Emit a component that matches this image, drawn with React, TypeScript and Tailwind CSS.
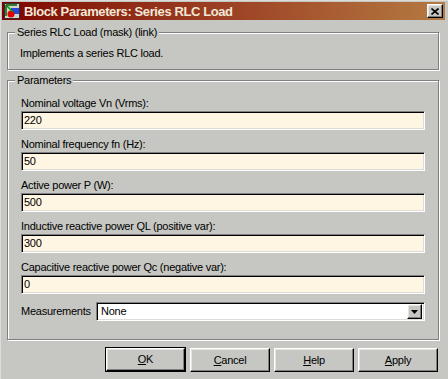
const FIELDS = [
  { label: 'Nominal voltage Vn (Vrms):', value: '220' },
  { label: 'Nominal frequency fn (Hz):', value: '50' },
  { label: 'Active power P (W):', value: '500' },
  { label: 'Inductive reactive power QL (positive var):', value: '300' },
  { label: 'Capacitive reactive power Qc (negative var):', value: '0' },
];

const BUTTONS = [
  { key: 'O', rest: 'K', isDefault: true },
  { key: 'C', rest: 'ancel', isDefault: false },
  { key: 'H', rest: 'elp', isDefault: false },
  { key: 'A', rest: 'pply', isDefault: false },
];

const raised =
  'border border-t-white border-l-white border-r-black border-b-black shadow-[inset_-1px_-1px_0_#808080,inset_1px_1px_0_#e4e4e0] bg-[#c6c7c2]';

const sunken =
  'border border-t-[#808080] border-l-[#808080] border-r-white border-b-white shadow-[inset_1px_1px_0_#000,inset_-1px_-1px_0_#dcdcd8]';

const groupBox =
  'border border-[#808080] shadow-[inset_1px_1px_0_#fff,1px_1px_0_#fff] m-0';

const BlockIcon = () => (
  <svg width="16" height="16" viewBox="0 0 16 16">
    <rect x="0.5" y="0.5" width="15" height="15" fill="#d4d4cc" stroke="#303030" />
    <path d="M2 2 L2 13 M2 2 L13 2" stroke="#006000" strokeWidth="1.5" />
    <rect x="7" y="5" width="8" height="6" fill="#2848d8" />
    <circle cx="7" cy="11" r="3.5" fill="#e00000" />
    <path d="M3 3 L9 9" stroke="#00a000" strokeWidth="1.5" />
  </svg>
);

const App = () => {
  return (
    <div className="w-[448px] h-[379px] overflow-hidden bg-[#c6c7c2] border-l border-t border-l-[#dcdcd8] border-t-[#dcdcd8] pl-[1px] pt-[1px] pr-[3px] font-['Liberation_Sans',Arial,sans-serif] text-[11px] tracking-[-0.25px] text-black">
      {/* title bar */}
      <div className="h-[18px] flex items-center bg-gradient-to-r from-[#7e0000] via-[#9c4024] to-[#b47a42] pl-[2px] pr-[2px]">
        <BlockIcon />
        <span className="ml-[4px] text-[13px] font-bold tracking-[-0.4px] text-[#f2e8d8] leading-none">
          Block Parameters: Series RLC Load
        </span>
        <div className={`ml-auto w-[16px] h-[14px] flex items-center justify-center ${raised}`}>
          <svg width="8" height="7" viewBox="0 0 8 7">
            <path d="M0.5 0.5 L7.5 6.5 M7.5 0.5 L0.5 6.5" stroke="#000" strokeWidth="1.6" />
          </svg>
        </div>
      </div>

      <div className="flex flex-col pl-[5px] pr-[6px]">
        {/* mask description */}
        <fieldset className={`${groupBox} mt-[5px] pl-[5px] pr-[8px] pt-[7px] pb-[9px]`}>
          <legend className="ml-[2px] px-[2px] leading-[14px] bg-[#c6c7c2]">
            Series RLC Load (mask) (link)
          </legend>
          <p className="pl-[7px] leading-[14px]">Implements a series RLC load.</p>
        </fieldset>

        {/* parameters */}
        <fieldset className={`${groupBox} mt-[3px] pl-[13px] pr-[13px] pt-[9px] pb-[18px]`}>
          <legend className="ml-[-6px] px-[2px] leading-[14px] bg-[#c6c7c2]">Parameters</legend>
          <div className="flex flex-col gap-[7px]">
            {FIELDS.map((f) => (
              <div key={f.label} className="flex flex-col">
                <label className="h-[14px] leading-[14px]">{f.label}</label>
                <div className={`mt-[1px] h-[19px] flex items-center pl-[2px] bg-[#fff5e3] ${sunken}`}>
                  {f.value}
                </div>
              </div>
            ))}
          </div>
          <div className="mt-[8px] flex items-center">
            <span className="w-[75px]">Measurements</span>
            <div className={`flex-1 h-[19px] flex items-center bg-white pl-[4px] pr-[2px] ${sunken}`}>
              <span>None</span>
              <div className={`ml-auto w-[15px] h-[15px] flex items-center justify-center ${raised}`}>
                <svg width="7" height="4" viewBox="0 0 7 4">
                  <path d="M0 0 H7 L3.5 4 Z" fill="#000" />
                </svg>
              </div>
            </div>
          </div>
        </fieldset>

        {/* buttons */}
        <div className="mt-[7px] flex justify-end gap-[4px] pr-[1px]">
          {BUTTONS.map((b) =>
            b.isDefault ? (
              <div key={b.key} className="w-[81px] h-[25px] border border-black flex">
                <button className={`flex-1 flex items-center justify-center ${raised}`}>
                  <span>
                    <u>{b.key}</u>
                    {b.rest}
                  </span>
                </button>
              </div>
            ) : (
              <button
                key={b.key}
                className={`w-[80px] h-[24px] mt-[1px] flex items-center justify-center ${raised}`}
              >
                <span>
                  <u>{b.key}</u>
                  {b.rest}
                </span>
              </button>
            ),
          )}
        </div>
      </div>
    </div>
  );
};

export default App;
